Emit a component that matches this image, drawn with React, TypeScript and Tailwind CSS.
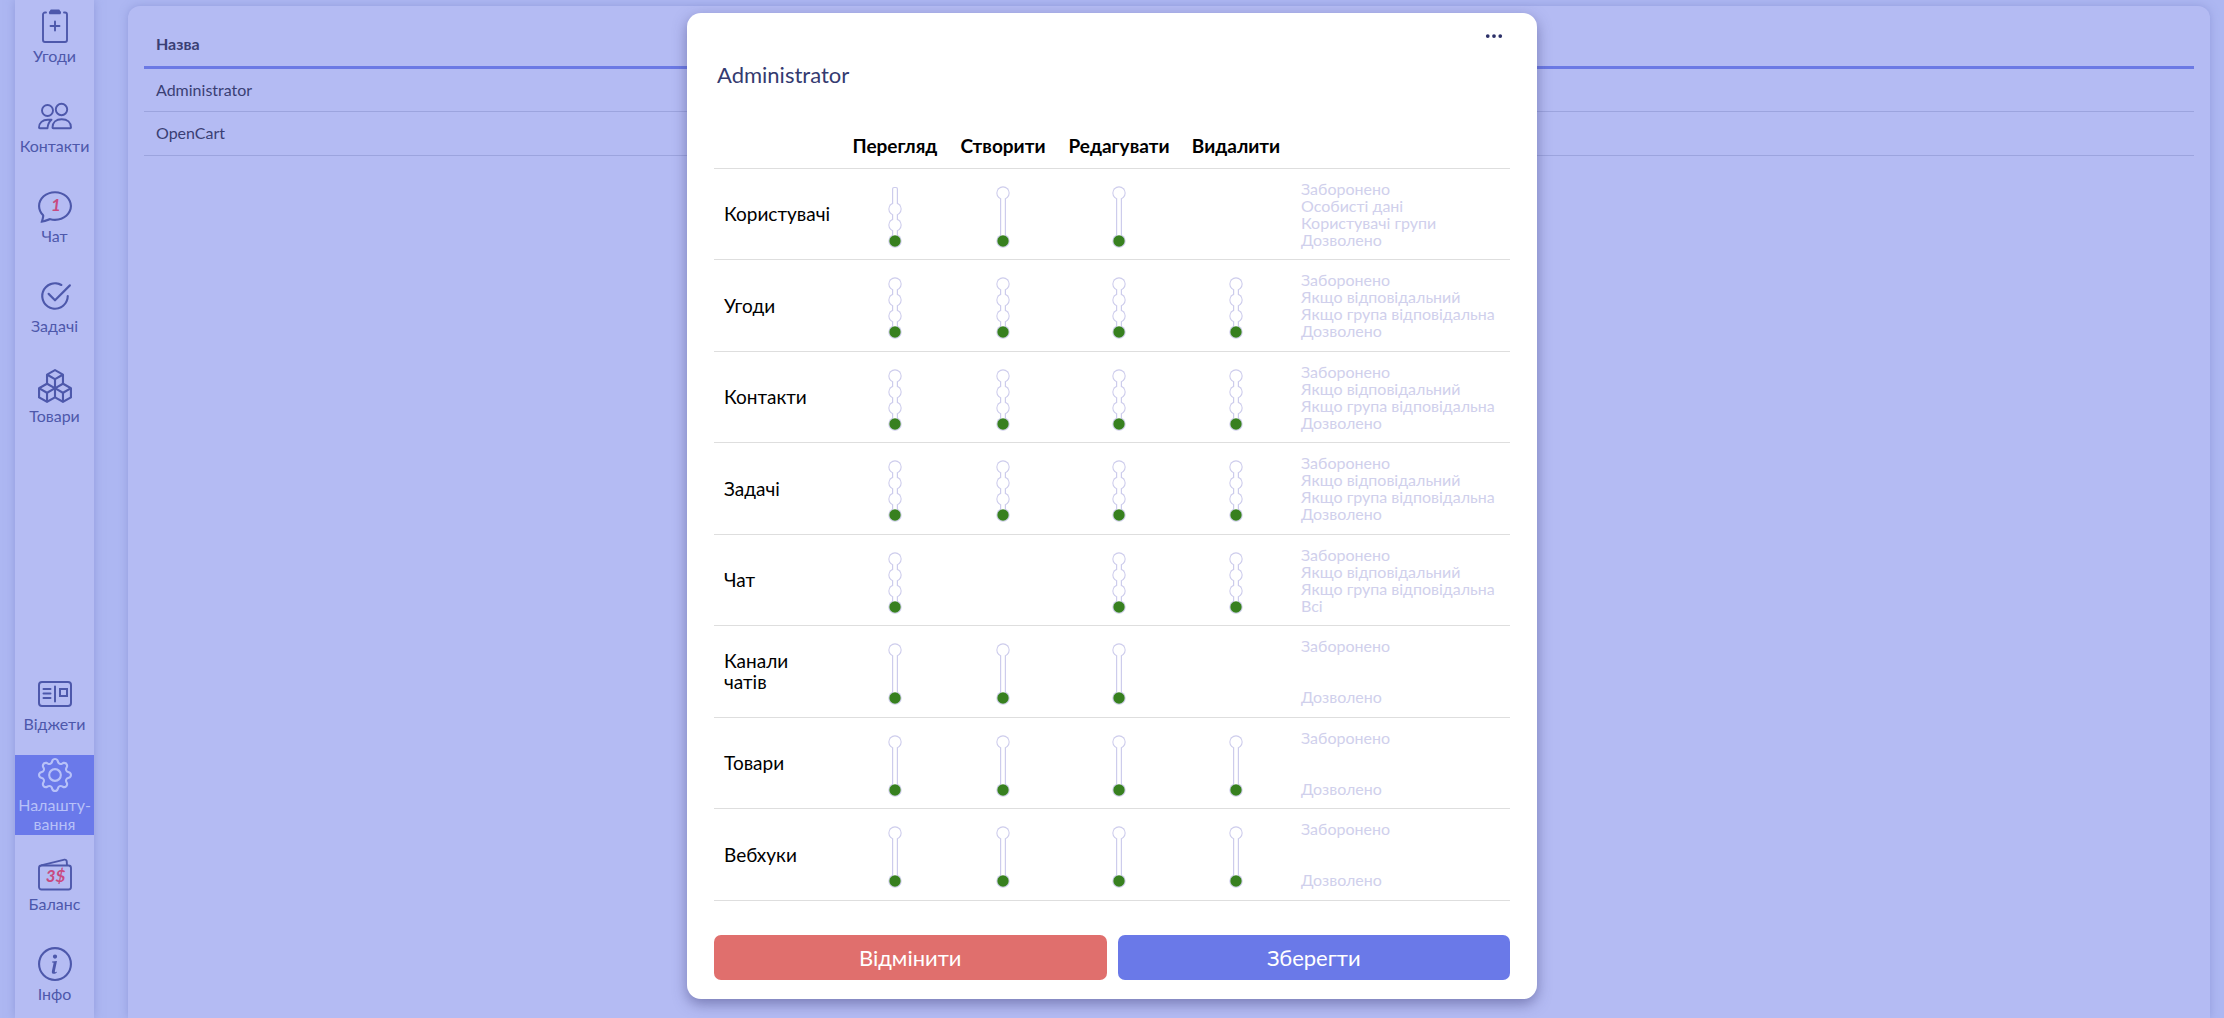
import React, { useState } from "react";
import { BsBoxes, BsChat, BsCheck2Circle, BsGear, BsInfoCircle, BsThreeDots } from "react-icons/bs";

const ClipboardIcon = () => (
  <svg viewBox="0 0 34 34" className="size-[34px]" fill="none" stroke="currentColor" strokeWidth="1.9" strokeLinecap="round">
    <path d="M8 3.5H7a2 2 0 0 0-2 2V31a2 2 0 0 0 2 2h20a2 2 0 0 0 2-2V5.500a2 2 0 0 0-2-2h-1" />
    <path d="M17 12.500v9M12.500 17h9" />
    <path d="M13 0.500h8c.8 0 .8 1.500 1.500 1.800.8.200.8 3-.5 3H12c-1.300 0-1.300-2.800-.5-3C12.200 2 12.200.500 13 .500z" fill="currentColor" stroke="none" />
  </svg>
);

const PeopleIcon = () => (
  <svg viewBox="0 0 34 34" className="size-[34px]" fill="none" stroke="currentColor" strokeWidth="1.9" strokeLinejoin="round">
    <circle cx="9.500" cy="11.500" r="5.500" />
    <circle cx="23.500" cy="10.500" r="5.700" />
    <path d="M14.500 28.500c0-5 3.600-8.200 9.200-8.200s9.300 3.200 9.300 8.200c0 .5-.3.800-.8.800H15.200c-.5 0-.7-.3-.7-.8z" />
    <path d="M13.500 20.700H9.800C4.500 20.700 1 24 1 28.500c0 .5.300.8.800.8h7.700c.2-3.600 1.600-6.600 4-8.600z" />
  </svg>
);

const ChatIcon = () => (
  <span className="relative block size-[34px]">
    <BsChat className="size-[34px]" />
    <span className="absolute inset-0 pl-[3px] text-center text-[17px] leading-[32px] font-bold text-[#c84a80] italic">1</span>
  </span>
);

const WidgetIcon = () => (
  <svg viewBox="0 0 34 34" className="size-[34px]" fill="none" stroke="currentColor" strokeWidth="2" strokeLinecap="round">
    <rect x="1" y="5" width="32" height="24" rx="3" />
    <path d="M5.500 12h7M5.500 16.500h7M5.500 21h7M17 9.500v15" />
    <rect x="22" y="12" width="7" height="7" strokeLinecap="butt" />
  </svg>
);

const WalletIcon = () => (
  <span className="relative block size-[34px]">
    <svg viewBox="0 0 34 34" className="size-[34px]" fill="none" stroke="currentColor" strokeWidth="1.9" strokeLinejoin="round">
      <rect x="1" y="8.500" width="32" height="24" rx="2.500" />
      <path d="M3 8.300 26.500 2.700a1.800 1.800 0 0 1 2.200 1.500l.3 4" />
    </svg>
    <span className="absolute inset-0 pt-[3px] pl-[2px] text-center text-[17px] leading-[32px] font-bold text-[#c84a80] italic">3$</span>
  </span>
);

type NavItem = { label: React.ReactNode; icon: React.ReactNode; active?: boolean };

const topNav: NavItem[] = [
  { label: "Угоди", icon: <ClipboardIcon /> },
  { label: "Контакти", icon: <PeopleIcon /> },
  { label: "Чат", icon: <ChatIcon /> },
  { label: "Задачі", icon: <BsCheck2Circle className="size-[34px]" /> },
  { label: "Товари", icon: <BsBoxes className="size-[34px]" /> },
];

const bottomNav: NavItem[] = [
  { label: "Віджети", icon: <WidgetIcon /> },
  { label: <>Налашту-<br />вання</>, icon: <BsGear className="size-[34px]" />, active: true },
  { label: "Баланс", icon: <WalletIcon /> },
  { label: "Інфо", icon: <BsInfoCircle className="size-[34px]" /> },
];

function NavList({ items }: { items: NavItem[] }) {
  return (
    <ul className="flex flex-col gap-[10px]">
      {items.map((item, i) => (
        <li key={i}>
          <a
            href="#"
            aria-current={item.active ? "page" : undefined}
            className={
              item.active
                ? "flex h-20 flex-col items-center justify-center gap-[3px] bg-[#6a79ea] text-center text-[16px] leading-[19px] text-[#b7c1f8]"
                : "flex h-20 flex-col items-center justify-center gap-[3px] text-center text-[16px] leading-[19px] text-[#4d58ab]"
            }
          >
            {item.icon}
            <span className="whitespace-nowrap">{item.label}</span>
          </a>
        </li>
      ))}
    </ul>
  );
}

const stopY = [13, 29, 45, 61];

function LevelSlider({ stops, label }: { stops: number[]; label: string }) {
  const [step, setStep] = useState(stops.length - 1);
  const top = stops[0] === 0 ? stopY[0] : 7;
  return (
    <div className="relative mx-auto h-[68px] w-[14px]">
      <svg viewBox="0 0 14 68" className="h-[68px] w-[14px]" aria-hidden="true">
        <g fill="#cdccec">
          <rect x="4" y={top} width="6" height={61 - top} rx="2" />
          {stops.map((s) => (
            <circle key={s} cx="7" cy={stopY[s]} r="6.700" />
          ))}
        </g>
        <g fill="#ffffff">
          <rect x="5.200" y={top + 1} width="3.600" height={60 - top} rx="1" />
          {stops.map((s) => (
            <circle key={s} cx="7" cy={stopY[s]} r="5.600" />
          ))}
        </g>
        <circle cx="7" cy={stopY[stops[step]]} r="5.700" fill="#37801f" />
      </svg>
      <input
        type="range"
        aria-label={label}
        min={0}
        max={stops.length - 1}
        value={step}
        onChange={(e) => setStep(Number(e.target.value))}
        className="absolute inset-0 h-full w-full cursor-pointer opacity-0 [direction:ltr] [writing-mode:vertical-lr]"
      />
    </div>
  );
}

const actions = ["Перегляд", "Створити", "Редагувати", "Видалити"];
const ALL = [0, 1, 2, 3];
const ENDS = [0, 3];
const owned = ["Заборонено", "Якщо відповідальний", "Якщо група відповідальна", "Дозволено"];
const binary = ["Заборонено", "", "", "Дозволено"];

const rows: { name: React.ReactNode; key: string; cells: (number[] | null)[]; legend: string[] }[] = [
  {
    name: "Користувачі",
    key: "Користувачі",
    cells: [[1, 2, 3], ENDS, ENDS, null],
    legend: ["Заборонено", "Особисті дані", "Користувачі групи", "Дозволено"],
  },
  { name: "Угоди", key: "Угоди", cells: [ALL, ALL, ALL, ALL], legend: owned },
  { name: "Контакти", key: "Контакти", cells: [ALL, ALL, ALL, ALL], legend: owned },
  { name: "Задачі", key: "Задачі", cells: [ALL, ALL, ALL, ALL], legend: owned },
  {
    name: "Чат",
    key: "Чат",
    cells: [ALL, null, ALL, ALL],
    legend: ["Заборонено", "Якщо відповідальний", "Якщо група відповідальна", "Всі"],
  },
  { name: <>Канали<br />чатів</>, key: "Канали чатів", cells: [ENDS, ENDS, ENDS, null], legend: binary },
  { name: "Товари", key: "Товари", cells: [ENDS, ENDS, ENDS, ENDS], legend: binary },
  { name: "Вебхуки", key: "Вебхуки", cells: [ENDS, ENDS, ENDS, ENDS], legend: binary },
];

function RoleDialog() {
  return (
    <section
      role="dialog"
      aria-labelledby="role-name"
      className="flex w-[850px] max-w-full flex-col rounded-[14px] bg-white px-[27px] pb-[19px] shadow-[0_5px_14px_rgba(60,60,120,0.5)]"
    >
      <div className="flex justify-end pt-[13px] pr-[6px]">
        <button type="button" aria-label="Меню" className="text-[#2c3068]">
          <BsThreeDots className="size-5" />
        </button>
      </div>
      <h1 id="role-name" className="mt-[15px] pl-[3px] text-[22px] leading-7 text-[#343a70]">
        Administrator
      </h1>
      <table className="mt-[35px] w-full table-fixed border-collapse text-[19px] leading-[21px] text-black">
        <colgroup>
          <col className="w-[127px]" />
          <col className="w-[108px]" />
          <col className="w-[108px]" />
          <col className="w-[124px]" />
          <col className="w-[110px]" />
          <col />
        </colgroup>
        <thead>
          <tr className="h-11 border-b border-[#dedede]">
            <td />
            {actions.map((a) => (
              <th key={a} scope="col" className="font-bold">
                {a}
              </th>
            ))}
            <td />
          </tr>
        </thead>
        <tbody>
          {rows.map((row) => (
            <tr key={row.key} className="border-b border-[#dedede] odd:h-[91px] even:h-[92px]">
              <th scope="row" className="pl-[10px] text-left font-normal">
                {row.name}
              </th>
              {row.cells.map((stops, i) => (
                <td key={i}>{stops && <LevelSlider stops={stops} label={row.key + ": " + actions[i]} />}</td>
              ))}
              <td className="pl-[10px] text-[16px] leading-[17px] whitespace-nowrap text-[#d0d0ec]">
                {row.legend.map((line, i) => (
                  <div key={i} className="h-[17px]">
                    {line}
                  </div>
                ))}
              </td>
            </tr>
          ))}
        </tbody>
      </table>
      <div className="mt-[34px] grid grid-cols-2 gap-[11px] text-[22px] leading-[45px] text-white">
        <button type="button" className="rounded-[7px] bg-[#e06f6d]">
          Відмінити
        </button>
        <button type="button" className="rounded-[7px] bg-[#6a79e8]">
          Зберегти
        </button>
      </div>
    </section>
  );
}

export default function App() {
  return (
    <div className="relative h-screen overflow-hidden bg-[#adb7f2] font-['Lato','Noto_Sans',sans-serif]">
      <div className="flex h-full pr-[14px] pl-[15px]">
        <nav className="flex w-[79px] shrink-0 flex-col justify-between bg-[#b5bcf3] pb-[3px] shadow-[0_0_9px_rgba(120,130,200,0.5)]">
          <div className="-mt-[3px]">
            <NavList items={topNav} />
          </div>
          <NavList items={bottomNav} />
        </nav>
        <main className="mt-[6px] ml-[34px] min-w-0 flex-1 rounded-t-[12px] bg-[#b4bbf3] px-4 pt-4 shadow-[0_0_9px_rgba(120,130,200,0.5)]">
          <table className="w-full border-collapse text-left text-[16px] leading-5 text-[#3a3f74]">
            <thead>
              <tr className="h-[45px] border-b-[3px] border-[#6b79e4]">
                <th scope="col" className="pl-3 font-bold">
                  Назва
                </th>
              </tr>
            </thead>
            <tbody>
              {["Administrator", "OpenCart"].map((name) => (
                <tr key={name} className="h-11 border-b border-[#9ca4de]">
                  <td className="pl-3">{name}</td>
                </tr>
              ))}
            </tbody>
          </table>
        </main>
      </div>
      <div className="absolute inset-0 flex items-start justify-center pt-[13px]">
        <RoleDialog />
      </div>
    </div>
  );
}
